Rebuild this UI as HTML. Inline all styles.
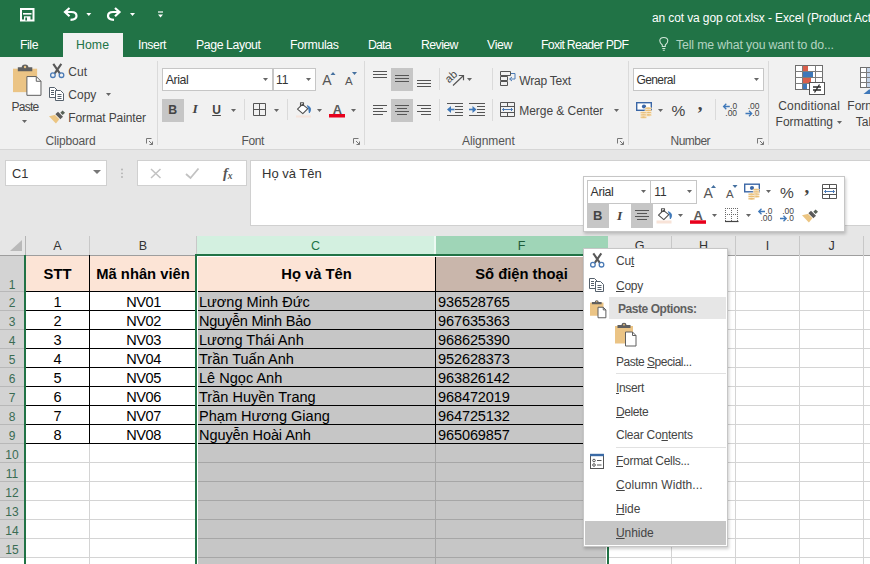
<!DOCTYPE html>
<html lang="vi">
<head>
<meta charset="utf-8">
<title>an cot va gop cot.xlsx - Excel</title>
<style>
*{box-sizing:border-box;margin:0;padding:0}
html,body{width:870px;height:564px;overflow:hidden;background:#fff}
body{position:relative;font-family:"Liberation Sans",sans-serif;font-size:12px;color:#444}
.a{position:absolute}
.t{position:absolute;white-space:nowrap;line-height:16px;font-size:12.4px;color:#3b3b3b}
.w{color:#fff}
svg{position:absolute;overflow:visible}
/* title + tabs */
#title{left:0;top:0;width:870px;height:57px;background:#217346}
#hometab{left:63px;top:33px;width:60px;height:25px;background:#f1f1f1}
.tab{position:absolute;top:37px;font-size:12.6px;line-height:16px;color:#fff;white-space:nowrap}
/* ribbon */
#ribbon{left:0;top:57px;width:870px;height:92px;background:#f1f1f1}
#fbar{left:0;top:149px;width:870px;height:87px;background:#e6e6e6;border-top:1px solid #d6d6d6}
.sep{position:absolute;width:1px;background:#dadada}
.box{position:absolute;background:#fff;border:1px solid #c6c6c6}
.hl{position:absolute;background:#c6c6c6}
.arr{position:absolute;width:0;height:0;border-left:3px solid transparent;border-right:3px solid transparent;border-top:3px solid #666}
.grp{position:absolute;top:133px;font-size:12.2px;line-height:16px;color:#555;white-space:nowrap}
/* grid */
#grid{left:0;top:236px;width:870px;height:328px;background:#fff}
.ch{position:absolute;top:236px;height:19px;background:#e6e6e6;border-right:1px solid #c8c8c8;font-size:12.5px;line-height:21px;text-align:center;color:#333;overflow:hidden}
.rh{position:absolute;left:0;width:24px;background:#d3d3d3;border-bottom:1px solid #b8b8b8;font-size:12px;color:#3a6c53;text-align:center;overflow:hidden}
.cell{position:absolute;font-size:14.55px;line-height:18px;color:#000;white-space:nowrap;overflow:hidden}
.b{font-weight:bold;font-size:14.75px}
.vl{position:absolute;width:1px;background:#d4d4d4}
.hline{position:absolute;height:1px;background:#d4d4d4}
.k{background:#000}
/* menu */
.mi{position:absolute;left:616px;font-size:12.4px;line-height:16px;color:#444;white-space:nowrap}
u{text-decoration:underline;text-underline-offset:1px}
</style>
</head>
<body>
<!-- TITLE BAR -->
<div id="title" class="a"></div>
<div id="hometab" class="a"></div>
<div class="t" style="left:652.0px;top:9.7px;font-size:12px;color:#fff;letter-spacing:-0.12px;">an cot va gop cot.xlsx - Excel (Product Act</div>
<div class="t" style="left:20.0px;top:37.2px;font-size:12.3px;color:#fff;letter-spacing:-0.44px;">File</div>
<div class="t" style="left:76.0px;top:37.2px;font-size:12.3px;color:#217346;letter-spacing:0.06px;">Home</div>
<div class="t" style="left:138.0px;top:37.2px;font-size:12.3px;color:#fff;letter-spacing:-0.45px;">Insert</div>
<div class="t" style="left:196.0px;top:37.2px;font-size:12.3px;color:#fff;letter-spacing:-0.41px;">Page Layout</div>
<div class="t" style="left:290.0px;top:37.2px;font-size:12.3px;color:#fff;letter-spacing:-0.32px;">Formulas</div>
<div class="t" style="left:368.0px;top:37.2px;font-size:12.3px;color:#fff;letter-spacing:-0.83px;">Data</div>
<div class="t" style="left:421.0px;top:37.2px;font-size:12.3px;color:#fff;letter-spacing:-0.57px;">Review</div>
<div class="t" style="left:487.0px;top:37.2px;font-size:12.3px;color:#fff;letter-spacing:-0.31px;">View</div>
<div class="t" style="left:541.0px;top:37.2px;font-size:12.3px;color:#fff;letter-spacing:-0.70px;">Foxit Reader PDF</div>
<div class="t" style="left:676.0px;top:37.2px;font-size:12.3px;color:#b3d4c1;letter-spacing:-0.14px;">Tell me what you want to do...</div>
<svg width="870" height="57" style="left:0;top:0" viewBox="0 0 870 57"><path d="M21 9 H33.5 V20.5 H21 Z" fill="none" stroke="#fff" stroke-width="2"/><path d="M23 13.800 H31.500" stroke="#fff" stroke-width="1.6"/><rect x="24" y="16.300" width="6.500" height="4.500" fill="#fff"/><rect x="25.300" y="17.500" width="1.700" height="3" fill="#217346"/><g fill="none" stroke="#fff" stroke-width="2.2" stroke-linecap="butt"><path d="M65 12 H71.5 Q76.5 12 76.5 16 Q76.5 19.5 70.5 19.8"/><path d="M69.5 8 L65 12 L69.5 16.2"/></g><polygon points="86.3,13 91.3,13 88.8,16" fill="#fff"/><g fill="none" stroke="#fff" stroke-width="2.2"><path d="M119.5 12 H113 Q108 12 108 16 Q108 19.5 114 19.8"/><path d="M115 8 L119.5 12 L115 16.2"/></g><polygon points="130.0,13 135.0,13 132.5,16" fill="#fff"/><path d="M158 12 H163" stroke="#fff" stroke-width="1.2"/><polygon points="158.0,14.5 163.0,14.5 160.5,17.5" fill="#fff"/><g fill="none" stroke="#cfe5d8" stroke-width="1.1" transform="translate(0.8,0)"><path d="M661.5 46.5 V45 Q659 43 659 40.8 Q659 37.5 663 37.5 Q667 37.5 667 40.8 Q667 43 664.500 45 V46.5 Z"/><path d="M661.5 48.5 H664.5 M662 50.3 H664"/></g></svg>
<!-- RIBBON -->
<div id="ribbon" class="a"></div>
<div id="fbar" class="a"></div>
<div class="sep" style="left:157px;top:61px;height:84px"></div>
<div class="sep" style="left:364px;top:61px;height:84px"></div>
<div class="sep" style="left:628px;top:61px;height:84px"></div>
<div class="sep" style="left:768px;top:61px;height:84px"></div>
<div class="t" style="left:11.4px;top:98.5px;font-size:12px;color:#444;letter-spacing:-0.72px;">Paste</div>
<div class="t" style="left:68.3px;top:64.0px;font-size:12px;color:#444;">Cut</div>
<div class="t" style="left:68.3px;top:87.2px;font-size:12px;color:#444;">Copy</div>
<div class="t" style="left:68.3px;top:109.7px;font-size:12px;color:#444;letter-spacing:-0.13px;">Format Painter</div>
<div class="t" style="left:45.5px;top:132.9px;font-size:12px;color:#555;letter-spacing:-0.16px;">Clipboard</div>
<div class="box" style="left:162px;top:68px;width:111px;height:23px"></div>
<div class="box" style="left:273px;top:68px;width:43px;height:23px"></div>
<div class="t" style="left:165.7px;top:72.2px;font-size:12.4px;color:#333;letter-spacing:-0.45px;">Arial</div>
<div class="t" style="left:276.0px;top:72.2px;font-size:12px;color:#333;">11</div>
<div class="t" style="left:322.2px;top:72.0px;font-size:14px;color:#555;">A</div>
<div class="t" style="left:345.0px;top:73.2px;font-size:11.5px;color:#555;">A</div>
<div class="hl" style="left:162px;top:99px;width:22px;height:23px"></div>
<div class="t" style="left:168.3px;top:101.7px;font-size:12.3px;color:#444;font-weight:bold;">B</div>
<div class="t" style="left:192.5px;top:101.4px;font-size:13px;color:#444;font-weight:bold;font-style:italic;font-family:'Liberation Serif',serif;font-size:13.5px;">I</div>
<div class="t" style="left:212.2px;top:101.5px;font-size:12px;color:#444;font-weight:bold;text-decoration:underline;text-underline-offset:1.2px;">U</div>
<div class="sep" style="left:244px;top:99px;height:21px"></div>
<div class="sep" style="left:287px;top:99px;height:21px"></div>
<div class="t" style="left:332.8px;top:101.7px;font-size:12.8px;color:#5a5a5a;font-weight:bold;">A</div>
<div class="t" style="left:241.5px;top:132.9px;font-size:12px;color:#555;letter-spacing:-0.40px;">Font</div>
<div class="hl" style="left:391px;top:68px;width:22px;height:23px"></div>
<div class="hl" style="left:391px;top:99px;width:22px;height:23px"></div>
<div class="sep" style="left:439px;top:68px;height:22px"></div>
<div class="sep" style="left:492px;top:68px;height:22px"></div>
<div class="sep" style="left:439px;top:99px;height:22px"></div>
<div class="sep" style="left:492px;top:99px;height:22px"></div>
<div class="t" style="left:519.3px;top:72.7px;font-size:12px;color:#444;letter-spacing:-0.23px;">Wrap Text</div>
<div class="t" style="left:519.3px;top:103.2px;font-size:12px;color:#444;letter-spacing:-0.05px;">Merge &amp; Center</div>
<div class="t" style="left:462.0px;top:132.9px;font-size:12px;color:#555;letter-spacing:-0.08px;">Alignment</div>
<div class="box" style="left:633px;top:68px;width:131px;height:23px"></div>
<div class="t" style="left:636.4px;top:72.2px;font-size:12px;color:#333;letter-spacing:-0.58px;">General</div>
<div class="t" style="left:671.5px;top:102.7px;font-size:15.5px;color:#444;">%</div>
<div class="t" style="left:697.8px;top:96.2px;font-size:19px;color:#444;font-weight:bold;font-family:'Liberation Serif',serif;">,</div>
<div class="sep" style="left:715px;top:99px;height:21px"></div>
<div class="t" style="left:670.6px;top:132.9px;font-size:12px;color:#555;letter-spacing:-0.54px;">Number</div>
<div class="t" style="left:778.3px;top:98.0px;font-size:12px;color:#444;letter-spacing:0.15px;">Conditional</div>
<div class="t" style="left:775.6px;top:114.0px;font-size:12px;color:#444;letter-spacing:0.01px;">Formatting</div>
<div class="t" style="left:847.3px;top:98.0px;font-size:12px;color:#444;">Forn</div>
<div class="t" style="left:855.8px;top:114.0px;font-size:12px;color:#444;">Tab</div>
<svg width="870" height="160" style="left:0;top:0" viewBox="0 0 870 160"><polygon points="22.0,120 27.0,120 24.5,123" fill="#666"/><polygon points="106.0,93 111.0,93 108.5,96" fill="#666"/><path d="M146.5 143.5 V138.5 H151.5" fill="none" stroke="#777" stroke-width="1"/><path d="M149 141 L152.5 144.5 M152.5 141.5 V144.5 H149.5" fill="none" stroke="#777" stroke-width="1"/><rect x="13.0" y="68.69" width="24.12" height="23.450000000000003" fill="#ebc485"/><path d="M17.824 71.37 V67.35 H21.71 Q21.71 64.402 25.060000000000002 64.402 Q28.41 64.402 28.41 67.35 H32.29600000000001 V71.37 Z" fill="#5f5f5f"/><circle cx="25.060000000000002" cy="66.94800000000001" r="1.2060000000000002" fill="#ebc485"/><path d="M26.9 76.56 H36.28 L40.97 81.25 V95.32 H26.9 Z" fill="#fff" stroke="#5f5f5f"/><path d="M36.28 76.56 V81.25 H40.97" fill="none" stroke="#5f5f5f"/><g fill="none"><path d="M53.3 63.8 L59.8 73.3 M61.3 63.8 L54.8 73.3" stroke="#585858" stroke-width="2.1"/><circle cx="52.9" cy="75.2" r="2.3" stroke="#4a7ab5" stroke-width="1.3"/><circle cx="61.5" cy="75.2" r="2.3" stroke="#4a7ab5" stroke-width="1.3"/></g><g fill="#fff" stroke="#55606c" stroke-width="1"><path d="M49.5 87.5 H54.5 L57.5 90.5 V97.5 H49.5 Z"/><path d="M55.5 90.5 H60.5 L63.5 93.5 V100.5 H55.5 Z"/></g><path d="M51 90.5 H54 M51 92.5 H54 M51 94.5 H54 M57.5 94.5 H61.5 M57.5 96.5 H61.5 M57.5 98.5 H61.5" stroke="#55606c" stroke-width="1" fill="none"/><g><path d="M49 116.3 L55.5 114.8 L59.8 118.7 L55.9 123.6 Z" fill="#ecc582"/><path d="M55.3 114.3 L58 111.8 L63 116.8 L60.3 119.3 Z" fill="#5a5a5a"/><path d="M60.3 112.7 L62.6 110.4 L65 112.8 L62.7 115.1 Z" fill="#566056"/><path d="M55 114.6 L60 119.5" stroke="#fff" stroke-width=".7"/></g><polygon points="263.0,78 268.0,78 265.5,81" fill="#666"/><polygon points="306.0,78 311.0,78 308.5,81" fill="#666"/><polygon points="330.5,75 335.5,75 333,72" fill="#44709f"/><polygon points="352,72 357,72 354.5,75" fill="#44709f"/><polygon points="231.0,109 236.0,109 233.5,112" fill="#666"/><path d="M253.5 103.5 H265.5 V115.5 H253.5 Z M259.5 103.5 V115.5 M253.5 109.5 H265.5" fill="none" stroke="#555" stroke-width="1"/><polygon points="274.0,109 279.0,109 276.5,112" fill="#666"/><g fill="none" stroke="#505050" stroke-width="1.1" stroke-linejoin="round"><path d="M302.4 104.4 L307.8 108.6 L302.8 113.6 L297.5 109.2 Z" fill="#fff"/><path d="M300.5 106.2 V102.8 H303.5 V105.3"/></g><path d="M307.4 105.6 Q312.8 108 309.3 113 Q309.3 109.5 307.4 105.6Z" fill="#3f78b9" stroke="#3f78b9" stroke-width=".8"/><rect x="296" y="115.500" width="15" height="2" fill="#f6e4dc"/><polygon points="317.0,109 322.0,109 319.5,112" fill="#666"/><rect x="329" y="114" width="16" height="3.5" fill="#e8001c"/><polygon points="351.0,109 356.0,109 353.5,112" fill="#666"/><path d="M353.5 143.5 V138.5 H358.5" fill="none" stroke="#777" stroke-width="1"/><path d="M356 141 L359.5 144.5 M359.5 141.5 V144.5 H356.5" fill="none" stroke="#777" stroke-width="1"/><path d="M373 71.5 H387 M373 74.5 H387 M373 77.5 H387 " stroke="#555" stroke-width="1" fill="none"/><path d="M395 75.5 H409 M395 78.5 H409 M395 81.5 H409 " stroke="#555" stroke-width="1" fill="none"/><path d="M417 80.5 H431 M417 83.5 H431 M417 86.5 H431 " stroke="#555" stroke-width="1" fill="none"/><path d="M373 105.5 H387 M373 108.5 H383 M373 111.5 H387 M373 114.5 H383 " stroke="#555" stroke-width="1" fill="none"/><path d="M395.0 105.5 H409.0 M397.0 108.5 H407.0 M395.0 111.5 H409.0 M397.0 114.5 H407.0 " stroke="#555" stroke-width="1" fill="none"/><path d="M417 105.5 H431 M421 108.5 H431 M417 111.5 H431 M421 114.5 H431 " stroke="#555" stroke-width="1" fill="none"/><text x="451.8" y="77.5" font-family="Liberation Sans,sans-serif" font-size="11" fill="#444" text-anchor="middle" transform="rotate(-42 451.8 77.5)" dy="2.5">ab</text><path d="M453 85.5 L463 76 M458.800 75.500 H463.500 V80.200" fill="none" stroke="#555" stroke-width="1.2"/><polygon points="467.0,78 472.0,78 469.5,81" fill="#666"/><path d="M447 103.5 H463 M447 115.5 H463 " stroke="#555" stroke-width="1" fill="none"/><path d="M455 106.5 H463 M455 109.5 H463 M455 112.5 H463 " stroke="#555" stroke-width="1" fill="none"/><path d="M449.5 109.5 H454.5" fill="none" stroke="#3f78b9" stroke-width="1.6"/><path d="M451 106 L447 109.500 L451 113Z" fill="#3f78b9"/><path d="M469 103.5 H485 M469 115.5 H485 " stroke="#555" stroke-width="1" fill="none"/><path d="M477 106.5 H485 M477 109.5 H485 M477 112.5 H485 " stroke="#555" stroke-width="1" fill="none"/><path d="M469 109.5 H474" fill="none" stroke="#3f78b9" stroke-width="1.6"/><path d="M472.5 106 L476.5 109.500 L472.5 113Z" fill="#3f78b9"/><g fill="none" stroke="#555" stroke-width="1"><path d="M500.5 71.5 H510.5 V75.5 H500.5 Z M500.5 76.5 H507.5 V80.5 H500.5 Z M500.5 81.5 H507.5 V85.5 H500.5 Z"/><path d="M511 73.5 H515 V79 H510 M512 77 L509.5 79 L512 81" stroke="#4a7ab5"/></g><g fill="none" stroke="#555" stroke-width="1"><path d="M500.5 102.5 H514.5 V116.5 H500.5 Z M500.5 106.5 H514.5 M500.5 112.5 H514.5 M507.5 102.5 V106.5 M507.5 112.5 V116.5"/><path d="M502.5 109.5 H512.5 M504 108 L502.5 109.5 L504 111 M511 108 L512.5 109.5 L511 111" stroke="#4a7ab5"/></g><polygon points="614.0,109 619.0,109 616.5,112" fill="#666"/><path d="M617.5 143.5 V138.5 H622.5" fill="none" stroke="#777" stroke-width="1"/><path d="M620 141 L623.5 144.5 M623.5 141.5 V144.5 H620.5" fill="none" stroke="#777" stroke-width="1"/><polygon points="754.0,78 759.0,78 756.5,81" fill="#666"/><rect x="636.7" y="102.7" width="14.6" height="7.6" fill="#fff" stroke="#3b67a6" stroke-width="1.4"/><circle cx="644" cy="106.5" r="2.1" fill="#3b67a6"/><ellipse cx="648.3" cy="108.3" rx="3.4" ry="1.25" fill="#e9bd74" stroke="#fff" stroke-width=".5"/><ellipse cx="648.3" cy="110.5" rx="3.4" ry="1.25" fill="#e9bd74" stroke="#fff" stroke-width=".5"/><ellipse cx="648.3" cy="112.7" rx="3.4" ry="1.25" fill="#e9bd74" stroke="#fff" stroke-width=".5"/><ellipse cx="648.3" cy="114.89999999999999" rx="3.4" ry="1.25" fill="#e9bd74" stroke="#fff" stroke-width=".5"/><ellipse cx="643.5" cy="112.8" rx="3.4" ry="1.25" fill="#e9bd74" stroke="#fff" stroke-width=".5"/><ellipse cx="643.5" cy="115.0" rx="3.4" ry="1.25" fill="#e9bd74" stroke="#fff" stroke-width=".5"/><ellipse cx="643.5" cy="117.2" rx="3.4" ry="1.25" fill="#e9bd74" stroke="#fff" stroke-width=".5"/><polygon points="658.0,109 663.0,109 660.5,112" fill="#666"/><path d="M723.5999999999999 106.5 H729.8 M726.3 103.8 L723.5999999999999 106.5 L726.3 109.2" fill="none" stroke="#3f78b9" stroke-width="1.3"/><text x="730.0999999999999" y="109.1" font-family="Liberation Sans,sans-serif" fill="#444" font-size="8.6" lengthAdjust="spacingAndGlyphs" textLength="7">.0</text><text x="725.3" y="116.1" font-family="Liberation Sans,sans-serif" fill="#444" font-size="8.6" lengthAdjust="spacingAndGlyphs" textLength="11.8">.00</text><text x="747.7" y="109.1" font-family="Liberation Sans,sans-serif" fill="#444" font-size="8.6" lengthAdjust="spacingAndGlyphs" textLength="11.8">.00</text><path d="M745.5 113.5 H751.7 M749.0 110.8 L751.7 113.5 L749.0 116.2" fill="none" stroke="#3f78b9" stroke-width="1.3"/><text x="752.3" y="116.1" font-family="Liberation Sans,sans-serif" fill="#444" font-size="8.6" lengthAdjust="spacingAndGlyphs" textLength="7">.0</text><path d="M757.5 143.5 V138.5 H762.5" fill="none" stroke="#777" stroke-width="1"/><path d="M760 141 L763.5 144.5 M763.5 141.5 V144.5 H760.5" fill="none" stroke="#777" stroke-width="1"/><polygon points="837.0,121 842.0,121 839.5,124" fill="#666"/><g><rect x="795.5" y="65.5" width="27" height="24" fill="#fff" stroke="#6e6e6e"/><path d="M795.5 71.5 H822.5 M795.5 77.5 H822.5 M795.5 83.5 H822.5 M802.5 65.5 V89.5 M815.5 65.5 V89.5" stroke="#7c7c7c" fill="none"/><rect x="803" y="66" width="5" height="5" fill="#d95f4b"/><rect x="803" y="72" width="10" height="5" fill="#3f78b9"/><rect x="803" y="78" width="8" height="5" fill="#d95f4b"/><rect x="803" y="84" width="4" height="5" fill="#3f78b9"/><rect x="809.5" y="82.5" width="15" height="12" fill="#fff" stroke="#555"/><path d="M813 87 H821 M813 90 H821 M819.5 84.5 L814.5 92.5" stroke="#2b2b2b" stroke-width="1.3" fill="none"/></g><g><rect x="860.5" y="67.5" width="12" height="20" fill="#fff" stroke="#6e6e6e"/><rect x="867" y="68" width="5" height="19" fill="#c5d5ea"/><path d="M860.5 72.5 H872 M860.5 77.5 H872 M860.5 82.5 H872 M866.5 67.5 V87.5" stroke="#7c7c7c" fill="none"/><path d="M863.500 94 L869 89.500 H870 V94Z" fill="#3f78b9"/></g></svg>
<!-- FORMULA BAR -->
<div class="box" style="left:5px;top:160px;width:102px;height:26px;border-color:#d0d0d0"></div>
<div class="t" style="left:12px;top:166px;font-size:12.8px;color:#333">C1</div>
<div class="arr" style="left:93px;top:170px;border-top-color:#777;border-width:4px 4px 0 4px"></div>
<div class="box" style="left:137px;top:160px;width:110px;height:26px;border-color:#d0d0d0"></div>
<div class="box" style="left:250px;top:160px;width:625px;height:66px;border-color:#d0d0d0"></div>
<div class="t" style="left:262px;top:166px;font-size:13px;color:#333">Họ và Tên</div>
<svg width="870" height="80" style="left:0;top:150px" viewBox="0 150 870 80"><path d="M151 169 L160.500 178 M160.500 169 L151 178" stroke="#c2c2c2" stroke-width="1.5" fill="none"/><path d="M186 174 L190.500 178 L198.500 168.500" stroke="#c2c2c2" stroke-width="1.8" fill="none"/><circle cx="122" cy="169.500" r="0.9" fill="#b0b0b0"/><circle cx="122" cy="173.300" r="0.9" fill="#b0b0b0"/><circle cx="122" cy="177" r="0.9" fill="#b0b0b0"/><text x="223" y="177.500" font-family="Liberation Serif,serif" font-style="italic" font-weight="bold" font-size="14.500" fill="#555">f</text><text x="227.800" y="178.500" font-family="Liberation Serif,serif" font-style="italic" font-weight="bold" font-size="9.500" fill="#555">x</text></svg>
<!-- GRID -->
<div id="grid" class="a"></div>
<div class="a" style="left:0;top:236px;width:870px;height:19px;background:#e6e6e6"></div>
<svg style="left:10px;top:240px" width="13" height="12"><polygon points="12,0 12,11 0,11" fill="#b9b9b9"/></svg>
<div class="vl" style="left:25px;top:236px;height:19px;background:#b4b4b4"></div>
<div class="ch" style="left:26px;width:64px;">A</div>
<div class="ch" style="left:90px;width:107px;">B</div>
<div class="ch" style="left:197px;width:239px;background:#d3f0e0;color:#217346;border-right:2px solid #ecf9f2;">C</div>
<div class="ch" style="left:436px;width:172px;background:#9fd5b7;color:#1e5c3a;border-right-color:#9fd5b7;">F</div>
<div class="ch" style="left:608px;width:64px;">G</div>
<div class="ch" style="left:672px;width:64px;">H</div>
<div class="ch" style="left:736px;width:64px;">I</div>
<div class="ch" style="left:800px;width:64px;">J</div>
<div class="ch" style="left:864px;width:37px;"></div>
<div class="rh" style="top:255px;height:37px;line-height:61px">1</div>
<div class="rh" style="top:292px;height:19px;line-height:23px">2</div>
<div class="rh" style="top:311px;height:19px;line-height:23px">3</div>
<div class="rh" style="top:330px;height:19px;line-height:23px">4</div>
<div class="rh" style="top:349px;height:19px;line-height:23px">5</div>
<div class="rh" style="top:368px;height:19px;line-height:23px">6</div>
<div class="rh" style="top:387px;height:19px;line-height:23px">7</div>
<div class="rh" style="top:406px;height:19px;line-height:23px">8</div>
<div class="rh" style="top:425px;height:19px;line-height:23px">9</div>
<div class="rh" style="top:444px;height:19px;line-height:23px">10</div>
<div class="rh" style="top:463px;height:19px;line-height:23px">11</div>
<div class="rh" style="top:482px;height:19px;line-height:23px">12</div>
<div class="rh" style="top:501px;height:19px;line-height:23px">13</div>
<div class="rh" style="top:520px;height:19px;line-height:23px">14</div>
<div class="rh" style="top:539px;height:19px;line-height:23px">15</div>
<div class="a" style="left:197px;top:255px;width:411px;height:309px;background:#c6c6c6"></div>
<div class="a" style="left:26px;top:255px;width:171px;height:36px;background:#fce4d6"></div>
<div class="a" style="left:197px;top:255px;width:239px;height:36px;background:#fce4d6"></div>
<div class="a" style="left:436px;top:255px;width:172px;height:36px;background:#c9b6ab"></div>
<div class="hline k" style="left:26px;top:291px;width:583px"></div>
<div class="hline" style="left:609px;top:291px;width:261px"></div>
<div class="hline k" style="left:26px;top:310px;width:583px"></div>
<div class="hline" style="left:609px;top:310px;width:261px"></div>
<div class="hline k" style="left:26px;top:329px;width:583px"></div>
<div class="hline" style="left:609px;top:329px;width:261px"></div>
<div class="hline k" style="left:26px;top:348px;width:583px"></div>
<div class="hline" style="left:609px;top:348px;width:261px"></div>
<div class="hline k" style="left:26px;top:367px;width:583px"></div>
<div class="hline" style="left:609px;top:367px;width:261px"></div>
<div class="hline k" style="left:26px;top:386px;width:583px"></div>
<div class="hline" style="left:609px;top:386px;width:261px"></div>
<div class="hline k" style="left:26px;top:405px;width:583px"></div>
<div class="hline" style="left:609px;top:405px;width:261px"></div>
<div class="hline k" style="left:26px;top:424px;width:583px"></div>
<div class="hline" style="left:609px;top:424px;width:261px"></div>
<div class="hline k" style="left:26px;top:443px;width:583px"></div>
<div class="hline" style="left:609px;top:443px;width:261px"></div>
<div class="hline" style="left:26px;top:462px;width:171px"></div>
<div class="hline" style="left:198px;top:462px;width:410px;background:#a6a6a6"></div>
<div class="hline" style="left:609px;top:462px;width:261px"></div>
<div class="hline" style="left:26px;top:481px;width:171px"></div>
<div class="hline" style="left:198px;top:481px;width:410px;background:#a6a6a6"></div>
<div class="hline" style="left:609px;top:481px;width:261px"></div>
<div class="hline" style="left:26px;top:500px;width:171px"></div>
<div class="hline" style="left:198px;top:500px;width:410px;background:#a6a6a6"></div>
<div class="hline" style="left:609px;top:500px;width:261px"></div>
<div class="hline" style="left:26px;top:519px;width:171px"></div>
<div class="hline" style="left:198px;top:519px;width:410px;background:#a6a6a6"></div>
<div class="hline" style="left:609px;top:519px;width:261px"></div>
<div class="hline" style="left:26px;top:538px;width:171px"></div>
<div class="hline" style="left:198px;top:538px;width:410px;background:#a6a6a6"></div>
<div class="hline" style="left:609px;top:538px;width:261px"></div>
<div class="hline" style="left:26px;top:557px;width:171px"></div>
<div class="hline" style="left:198px;top:557px;width:410px;background:#a6a6a6"></div>
<div class="hline" style="left:609px;top:557px;width:261px"></div>
<div class="hline" style="left:0px;top:255px;width:870px;background:#9e9e9e"></div>
<div class="vl k" style="left:89px;top:255px;height:188px"></div>
<div class="vl k" style="left:196px;top:255px;height:188px"></div>
<div class="vl k" style="left:435px;top:255px;height:188px"></div>
<div class="vl" style="left:89px;top:444px;height:120px"></div>
<div class="vl" style="left:435px;top:444px;height:120px;background:#a6a6a6"></div>
<div class="vl" style="left:671px;top:255px;height:309px"></div>
<div class="vl" style="left:735px;top:255px;height:309px"></div>
<div class="vl" style="left:799px;top:255px;height:309px"></div>
<div class="vl" style="left:863px;top:255px;height:309px"></div>
<div class="a" style="left:24px;top:255px;width:2px;height:309px;background:#217346"></div>
<div class="a" style="left:197px;top:256px;width:1px;height:310px;background:#fff"></div>
<div class="a" style="left:606px;top:256px;width:1px;height:310px;background:#fff"></div>
<div class="a" style="left:197px;top:256px;width:410px;height:1px;background:#fff"></div>
<div class="a" style="left:195px;top:254px;width:2px;height:310px;background:#217346"></div>
<div class="a" style="left:195px;top:254px;width:414px;height:2px;background:#217346"></div>
<div class="a" style="left:607px;top:254px;width:2px;height:310px;background:#217346"></div>
<div class="cell b" style="left:26px;top:265px;width:63px;text-align:center">STT</div>
<div class="cell b" style="left:90px;top:265px;width:106px;text-align:center">Mã nhân viên</div>
<div class="cell b" style="left:198px;top:265px;width:237px;text-align:center">Họ và Tên</div>
<div class="cell b" style="left:436px;top:265px;width:171px;text-align:center">Số điện thoại</div>
<div class="cell" style="left:26px;top:293px;width:63px;text-align:center">1</div>
<div class="cell" style="left:90px;top:293px;width:107px;text-align:center;letter-spacing:-0.45px">NV01</div>
<div class="cell" style="left:199px;top:293px;width:236px">Lương Minh Đức</div>
<div class="cell" style="left:438px;top:293px;width:168px;letter-spacing:-0.12px">936528765</div>
<div class="cell" style="left:26px;top:312px;width:63px;text-align:center">2</div>
<div class="cell" style="left:90px;top:312px;width:107px;text-align:center;letter-spacing:-0.45px">NV02</div>
<div class="cell" style="left:199px;top:312px;width:236px;letter-spacing:-0.25px">Nguyễn Minh Bảo</div>
<div class="cell" style="left:438px;top:312px;width:168px;letter-spacing:-0.12px">967635363</div>
<div class="cell" style="left:26px;top:331px;width:63px;text-align:center">3</div>
<div class="cell" style="left:90px;top:331px;width:107px;text-align:center;letter-spacing:-0.45px">NV03</div>
<div class="cell" style="left:199px;top:331px;width:236px">Lương Thái Anh</div>
<div class="cell" style="left:438px;top:331px;width:168px;letter-spacing:-0.12px">968625390</div>
<div class="cell" style="left:26px;top:350px;width:63px;text-align:center">4</div>
<div class="cell" style="left:90px;top:350px;width:107px;text-align:center;letter-spacing:-0.45px">NV04</div>
<div class="cell" style="left:199px;top:350px;width:236px">Trần Tuấn Anh</div>
<div class="cell" style="left:438px;top:350px;width:168px;letter-spacing:-0.12px">952628373</div>
<div class="cell" style="left:26px;top:369px;width:63px;text-align:center">5</div>
<div class="cell" style="left:90px;top:369px;width:107px;text-align:center;letter-spacing:-0.45px">NV05</div>
<div class="cell" style="left:199px;top:369px;width:236px">Lê Ngọc Anh</div>
<div class="cell" style="left:438px;top:369px;width:168px;letter-spacing:-0.12px">963826142</div>
<div class="cell" style="left:26px;top:388px;width:63px;text-align:center">6</div>
<div class="cell" style="left:90px;top:388px;width:107px;text-align:center;letter-spacing:-0.45px">NV06</div>
<div class="cell" style="left:199px;top:388px;width:236px">Trần Huyền Trang</div>
<div class="cell" style="left:438px;top:388px;width:168px;letter-spacing:-0.12px">968472019</div>
<div class="cell" style="left:26px;top:407px;width:63px;text-align:center">7</div>
<div class="cell" style="left:90px;top:407px;width:107px;text-align:center;letter-spacing:-0.45px">NV07</div>
<div class="cell" style="left:199px;top:407px;width:236px">Phạm Hương Giang</div>
<div class="cell" style="left:438px;top:407px;width:168px;letter-spacing:-0.12px">964725132</div>
<div class="cell" style="left:26px;top:426px;width:63px;text-align:center">8</div>
<div class="cell" style="left:90px;top:426px;width:107px;text-align:center;letter-spacing:-0.45px">NV08</div>
<div class="cell" style="left:199px;top:426px;width:236px;letter-spacing:-0.1px">Nguyễn Hoài Anh</div>
<div class="cell" style="left:438px;top:426px;width:168px;letter-spacing:-0.12px">965069857</div>
<div class="a" style="left:583px;top:176px;width:262px;height:56px;background:#fff;border:1px solid #c6c6c6;box-shadow:1px 2px 3px rgba(0,0,0,.2)"></div>
<div class="box" style="left:587px;top:180px;width:64px;height:24px"></div>
<div class="box" style="left:650px;top:180px;width:47px;height:24px"></div>
<div class="t" style="left:590.5px;top:183.7px;font-size:12.4px;color:#333;letter-spacing:-0.38px;">Arial</div>
<div class="t" style="left:654.2px;top:183.7px;font-size:12px;color:#333;">11</div>
<div class="t" style="left:703.5px;top:185.0px;font-size:14px;color:#555;">A</div>
<div class="t" style="left:726.0px;top:186.2px;font-size:11.5px;color:#555;">A</div>
<div class="t" style="left:780.0px;top:185.2px;font-size:15.5px;color:#444;">%</div>
<div class="t" style="left:804.5px;top:179.2px;font-size:19px;color:#444;font-weight:bold;font-family:'Liberation Serif',serif;">,</div>
<div class="hl" style="left:587px;top:204px;width:22px;height:24px"></div>
<div class="hl" style="left:631px;top:204px;width:22px;height:24px"></div>
<div class="t" style="left:593.0px;top:208.2px;font-size:13px;color:#444;font-weight:bold;">B</div>
<div class="t" style="left:617.0px;top:208.2px;font-size:13.5px;color:#444;font-weight:bold;font-style:italic;font-family:'Liberation Serif',serif;">I</div>
<div class="t" style="left:693.6px;top:207.9px;font-size:13px;color:#5a5a5a;font-weight:bold;">A</div>
<svg width="870" height="70" style="left:0;top:170px" viewBox="0 170 870 70"><polygon points="641.0,190 646.0,190 643.5,193" fill="#666"/><polygon points="687.0,190 692.0,190 689.5,193" fill="#666"/><polygon points="711,188 716,188 713.5,185" fill="#44709f"/><polygon points="732.5,185 737.5,185 735,188" fill="#44709f"/><rect x="744.7" y="184.2" width="14.6" height="7.6" fill="#fff" stroke="#3b67a6" stroke-width="1.4"/><circle cx="752" cy="188.0" r="2.1" fill="#3b67a6"/><ellipse cx="756.3" cy="189.8" rx="3.4" ry="1.25" fill="#e9bd74" stroke="#fff" stroke-width=".5"/><ellipse cx="756.3" cy="192.0" rx="3.4" ry="1.25" fill="#e9bd74" stroke="#fff" stroke-width=".5"/><ellipse cx="756.3" cy="194.20000000000002" rx="3.4" ry="1.25" fill="#e9bd74" stroke="#fff" stroke-width=".5"/><ellipse cx="756.3" cy="196.4" rx="3.4" ry="1.25" fill="#e9bd74" stroke="#fff" stroke-width=".5"/><ellipse cx="751.5" cy="194.3" rx="3.4" ry="1.25" fill="#e9bd74" stroke="#fff" stroke-width=".5"/><ellipse cx="751.5" cy="196.5" rx="3.4" ry="1.25" fill="#e9bd74" stroke="#fff" stroke-width=".5"/><ellipse cx="751.5" cy="198.70000000000002" rx="3.4" ry="1.25" fill="#e9bd74" stroke="#fff" stroke-width=".5"/><polygon points="766.0,190 771.0,190 768.5,193" fill="#666"/><g fill="none" stroke="#555" stroke-width="1"><path d="M822.5 184.5 H836.5 V198.5 H822.5 Z M822.5 188.5 H836.5 M822.5 194.5 H836.5 M829.5 184.5 V188.5 M829.5 194.5 V198.5"/><path d="M824.5 191.5 H834.5 M826 190 L824.5 191.5 L826 193 M833 190 L834.5 191.5 L833 193" stroke="#4a7ab5"/></g><path d="M635 210.5 H649 M637 213.5 H647 M635 216.5 H649 M637 219.5 H647" stroke="#555" fill="none"/><g fill="none" stroke="#505050" stroke-width="1.1" stroke-linejoin="round"><path d="M663.4 210.4 L668.8 214.6 L663.8 219.6 L658.5 215.2 Z" fill="#fff"/><path d="M661.5 212.2 V208.8 H664.5 V211.3"/></g><path d="M668.4 211.6 Q673.8 214 670.3 219 Q670.3 215.5 668.4 211.6Z" fill="#3f78b9" stroke="#3f78b9" stroke-width=".8"/><rect x="656.500" y="220.500" width="15" height="3" fill="#f8e3d8"/><polygon points="678.0,214 683.0,214 680.5,217" fill="#666"/><rect x="690" y="220.300" width="16" height="3.500" fill="#e8001c"/><polygon points="712.0,214 717.0,214 714.5,217" fill="#666"/><path d="M725 208.5 H738 M725 214.5 H738 M725.5 208 V221 M731.5 208 V221 M737.5 208 V221 " stroke="#6a6a6a" stroke-width="1" stroke-dasharray="1 1" fill="none"/><path d="M725 221.500 H738.500" stroke="#444" stroke-width="1.2"/><polygon points="746.0,214 751.0,214 748.5,217" fill="#666"/><path d="M758.8 211.5 H765.0 M761.5 208.8 L758.8 211.5 L761.5 214.2" fill="none" stroke="#3f78b9" stroke-width="1.3"/><text x="765.3" y="214.1" font-family="Liberation Sans,sans-serif" fill="#444" font-size="8.6" lengthAdjust="spacingAndGlyphs" textLength="7">.0</text><text x="760.5" y="221.1" font-family="Liberation Sans,sans-serif" fill="#444" font-size="8.6" lengthAdjust="spacingAndGlyphs" textLength="11.8">.00</text><text x="782.2" y="214.1" font-family="Liberation Sans,sans-serif" fill="#444" font-size="8.6" lengthAdjust="spacingAndGlyphs" textLength="11.8">.00</text><path d="M780 218.5 H786.2 M783.5 215.8 L786.2 218.5 L783.5 221.2" fill="none" stroke="#3f78b9" stroke-width="1.3"/><text x="786.8" y="221.1" font-family="Liberation Sans,sans-serif" fill="#444" font-size="8.6" lengthAdjust="spacingAndGlyphs" textLength="7">.0</text><g><path d="M802 215.3 L808.5 213.8 L812.8 217.7 L808.9 222.6 Z" fill="#ecc582"/><path d="M808.3 213.3 L811 210.8 L816 215.8 L813.3 218.3 Z" fill="#5a5a5a"/><path d="M813.3 211.7 L815.6 209.4 L818 211.8 L815.7 214.1 Z" fill="#566056"/><path d="M808 213.6 L813 218.5" stroke="#fff" stroke-width=".7"/></g></svg>
<div class="a" style="left:583px;top:248px;width:145px;height:299px;background:#fff;border:1px solid #c6c6c6;box-shadow:1px 2px 3px rgba(0,0,0,.2)"></div>
<div class="a" style="left:609px;top:297px;width:117px;height:22px;background:#e6e6e6"></div>
<div class="a" style="left:585px;top:521px;width:141px;height:24px;background:#c6c6c6"></div>
<div class="hline" style="left:616px;top:373px;width:110px;background:#e1e1e1"></div>
<div class="hline" style="left:616px;top:447px;width:110px;background:#e1e1e1"></div>
<div class="mi" style="top:253.4px;font-size:12px;letter-spacing:-0.19px;color:#444;">Cu<u>t</u></div>
<div class="mi" style="top:277.5px;font-size:12px;letter-spacing:-0.24px;color:#444;"><u>C</u>opy</div>
<div class="mi" style="top:300.7px;font-size:12px;letter-spacing:-0.44px;color:#606060;font-weight:bold;left:618px;">Paste Options:</div>
<div class="mi" style="top:354.1px;font-size:12px;letter-spacing:-0.49px;color:#444;">Paste <u>S</u>pecial...</div>
<div class="mi" style="top:379.7px;font-size:12px;letter-spacing:-0.34px;color:#444;"><u>I</u>nsert</div>
<div class="mi" style="top:403.5px;font-size:12px;letter-spacing:-0.42px;color:#444;"><u>D</u>elete</div>
<div class="mi" style="top:427.3px;font-size:12px;letter-spacing:-0.24px;color:#444;">Clear Co<u>n</u>tents</div>
<div class="mi" style="top:453.1px;font-size:12px;letter-spacing:-0.29px;color:#444;"><u>F</u>ormat Cells...</div>
<div class="mi" style="top:477.2px;font-size:12px;letter-spacing:0.08px;color:#444;"><u>C</u>olumn Width...</div>
<div class="mi" style="top:501.1px;font-size:12px;letter-spacing:-0.13px;color:#444;"><u>H</u>ide</div>
<div class="mi" style="top:525.2px;font-size:12px;letter-spacing:-0.07px;color:#444;"><u>U</u>nhide</div>
<svg width="870" height="320" style="left:0;top:244px" viewBox="0 244 870 320"><g fill="none"><path d="M593.3 253.3 L599.8 262.8 M601.3 253.3 L594.8 262.8" stroke="#585858" stroke-width="2.1"/><circle cx="592.9" cy="264.7" r="2.3" stroke="#4a7ab5" stroke-width="1.3"/><circle cx="601.5" cy="264.7" r="2.3" stroke="#4a7ab5" stroke-width="1.3"/></g><g fill="#fff" stroke="#55606c" stroke-width="1"><path d="M589.5 278.5 H594.5 L597.5 281.5 V288.5 H589.5 Z"/><path d="M595.5 281.5 H600.5 L603.5 284.5 V291.5 H595.5 Z"/></g><path d="M591 281.5 H594 M591 283.5 H594 M591 285.5 H594 M597.5 285.5 H601.5 M597.5 287.5 H601.5 M597.5 289.5 H601.5" stroke="#55606c" stroke-width="1" fill="none"/><rect x="590.0" y="302.625" width="13.5" height="13.125" fill="#ebc485"/><path d="M591.875 304.125 V301.875 H594.875 Q594.875 300.225 596.75 300.225 Q598.625 300.225 598.625 301.875 H601.625 V304.125 Z" fill="#5f5f5f"/><circle cx="596.75" cy="301.65" r="0.675" fill="#ebc485"/><path d="M598.0 307.25 H603.25 L605.875 309.875 V317.75 H598.0 Z" fill="#fff" stroke="#5f5f5f"/><path d="M603.25 307.25 V309.875 H605.875" fill="none" stroke="#5f5f5f"/><rect x="615.0" y="326.0" width="18.0" height="17.5" fill="#ebc485"/><path d="M617.5 328.0 V325.0 H621.5 Q621.5 322.8 624.0 322.8 Q626.5 322.8 626.5 325.0 H630.5 V328.0 Z" fill="#5f5f5f"/><circle cx="624.0" cy="324.7" r="0.9" fill="#ebc485"/><path d="M625.5 332.0 H632.5 L636.0 335.5 V346.0 H625.5 Z" fill="#fff" stroke="#5f5f5f"/><path d="M632.5 332.0 V335.5 H636.0" fill="none" stroke="#5f5f5f"/><g fill="none" stroke="#555"><rect x="590.5" y="454.5" width="13" height="14" fill="#fff"/><path d="M590 455 H604" stroke="#3b6aa5" stroke-width="2.4"/><circle cx="594" cy="460.500" r="1.3"/><circle cx="594" cy="465" r="1.3"/><path d="M597 460.500 H601.500 M597 465 H601.500"/></g></svg>
</body>
</html>
